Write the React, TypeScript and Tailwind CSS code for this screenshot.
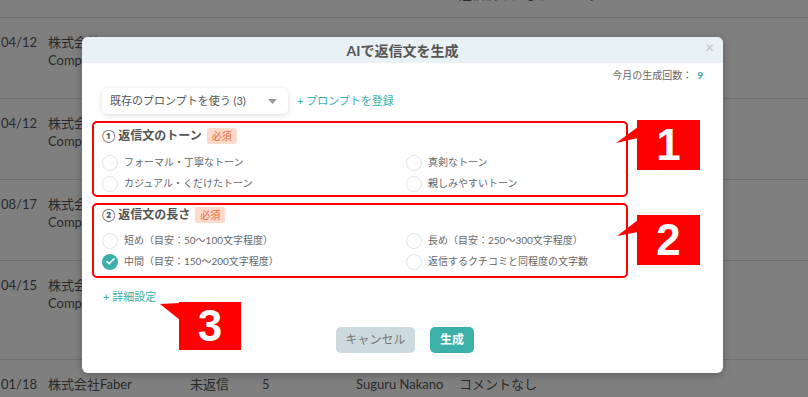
import { Check } from "lucide-react";

const font = "font-['Lato','Noto_Sans_CJK_JP',sans-serif]";

type Row = { date: string; company: string; sub: string; status?: string; count?: string; name?: string; comment?: string; h: string };

const rows: Row[] = [
  { date: "04/12", company: "株式会社Faber", sub: "Company Faber", h: "h-[81px]" },
  { date: "04/12", company: "株式会社Faber", sub: "Company Faber", h: "h-[81px]" },
  { date: "08/17", company: "株式会社Faber", sub: "Company Faber", h: "h-[81px]" },
  { date: "04/15", company: "株式会社Faber", sub: "Company Faber", h: "h-[99px]" },
  {
    date: "01/18",
    company: "株式会社Faber",
    sub: "Company Faber",
    status: "未返信",
    count: "5",
    name: "Suguru Nakano",
    comment: "コメントなし",
    h: "h-[81px]",
  },
];

function Radio({ label, checked }: { label: string; checked?: boolean }) {
  return (
    <div className="flex h-[21px] items-center gap-[6px]">
      {checked ? (
        <span className="flex h-[16px] w-[16px] items-center justify-center rounded-full bg-[#3bb0a9]">
          <Check size={11} strokeWidth={3.5} color="#fff" />
        </span>
      ) : (
        <span className="h-[16px] w-[16px] rounded-full border border-[#dde4e8] bg-white" />
      )}
      <span className="text-[10px] text-[#666]">{label}</span>
    </div>
  );
}

function Required() {
  return (
    <span className="ml-[5px] flex h-[16px] items-center rounded-[2px] bg-[#fddacb] px-[5px] text-[10px] text-[#f0663c]">
      必須
    </span>
  );
}

function Callout({ n, box, tri, points }: { n: string; box: string; tri: string; points: string }) {
  return (
    <>
      <svg className={`absolute ${tri}`} width="24" height="20" viewBox="0 0 24 20">
        <polygon points={points} fill="#ff0000" />
      </svg>
      <div
        className={`absolute flex items-center justify-center bg-[#ff0000] font-['Liberation_Sans',Arial,sans-serif] text-[44px] font-bold leading-none text-white ${box}`}
      >
        {n}
      </div>
    </>
  );
}

export default function App() {
  return (
    <div className={`relative h-[397px] w-[808px] overflow-hidden bg-white ${font}`}>
      {/* page behind the dialog */}
      <div className="flex flex-col">
        <div className="relative h-[18px] border-b border-[#dcdcdc]">
          <span className="absolute left-[459px] top-[-15px] whitespace-nowrap text-[13px] text-[#555]">
            返信済みになりました。
          </span>
        </div>
        {rows.map((r, i) => (
          <div key={i} className={`flex border-b border-[#dcdcdc] pt-[15px] text-[13px] leading-[18px] text-[#555] ${r.h}`}>
            <div className="w-[48px] whitespace-nowrap pl-px">{r.date}</div>
            <div className="flex w-[142px] flex-col whitespace-nowrap">
              <span>{r.company}</span>
              <span>{r.sub}</span>
            </div>
            <div className="w-[72px]">{r.status}</div>
            <div className="w-[94px]">{r.count}</div>
            <div className="w-[103px] whitespace-nowrap">{r.name}</div>
            <div className="whitespace-nowrap">{r.comment}</div>
          </div>
        ))}
      </div>

      <div className="absolute inset-0 bg-black/50" />

      {/* dialog */}
      <div className="absolute left-[82px] top-[37px] flex h-[336px] w-[641px] flex-col rounded-[6px] bg-white shadow-[0_2px_8px_rgba(0,0,0,0.25)]">
        <div className="relative flex h-[26px] items-center justify-center rounded-t-[6px] bg-[#e8f1f3]">
          <span className="text-[14px] font-bold text-[#555]">AIで返信文を生成</span>
          <span className="absolute right-[9px] top-[3px] text-[15px] leading-none text-[#c4c4c4]">×</span>
        </div>

        <div className="flex justify-end pr-[20px] pt-[5px] text-[10px] leading-[14px] text-[#666]">
          今月の生成回数：
          <span className="ml-[5px] font-bold text-[#3bb0a9]">9</span>
        </div>

        <div className="mt-[6px] flex items-center pl-[20px]">
          <div className="flex h-[26px] w-[186px] items-center justify-between rounded-[5px] bg-white pl-[8px] pr-[11px] shadow-[0_1px_5px_rgba(0,0,0,0.15)]">
            <span className="text-[11px] text-[#555]">既存のプロンプトを使う (3)</span>
            <svg width="9" height="5" viewBox="0 0 9 5">
              <polygon points="0,0 9,0 4.5,5" fill="#9a9a9a" />
            </svg>
          </div>
          <span className="ml-[9px] text-[11px] text-[#3bb0a9]">+ プロンプトを登録</span>
        </div>

        {/* tone */}
        <div className="ml-[10px] mt-[7px] w-[536px] rounded-[5px] border-2 border-[#ff0000] px-[8px] pb-[1px] pt-[5px]">
          <div className="flex h-[16px] items-center">
            <span className="text-[12px] font-bold text-[#555]">① 返信文のトーン</span>
            <Required />
          </div>
          <div className="mt-[8px] grid grid-cols-[304px_1fr]">
            <Radio label="フォーマル・丁寧なトーン" />
            <Radio label="真剣なトーン" />
            <Radio label="カジュアル・くだけたトーン" />
            <Radio label="親しみやすいトーン" />
          </div>
        </div>

        {/* length */}
        <div className="ml-[10px] mt-[6px] w-[536px] rounded-[5px] border-2 border-[#ff0000] px-[8px] pb-[4px] pt-[2px]">
          <div className="flex h-[16px] items-center">
            <span className="text-[12px] font-bold text-[#555]">② 返信文の長さ</span>
            <Required />
          </div>
          <div className="mt-[7px] grid grid-cols-[304px_1fr]">
            <Radio label="短め（目安：50〜100文字程度）" />
            <Radio label="長め（目安：250〜300文字程度）" />
            <Radio label="中間（目安：150〜200文字程度）" checked />
            <Radio label="返信するクチコミと同程度の文字数" />
          </div>
        </div>

        <div className="ml-[21px] mt-[12px] text-[11px] leading-[14px] text-[#3bb0a9]">+ 詳細設定</div>

        <div className="ml-[254px] mt-[23px] flex gap-[15px]">
          <span className="flex h-[26px] w-[79px] items-center justify-center rounded-[5px] bg-[#ccd9df] text-[12px] text-[#777]">
            キャンセル
          </span>
          <span className="flex h-[26px] w-[44px] items-center justify-center rounded-[5px] bg-[#3bb0a9] text-[12px] font-bold text-white">
            生成
          </span>
        </div>
      </div>

      <Callout n="1" box="left-[637px] top-[120px] h-[50px] w-[63px]" tri="left-[615px] top-[125px]" points="1,18 23,2 23,13" />
      <Callout n="2" box="left-[637px] top-[215px] h-[50px] w-[63px]" tri="left-[615px] top-[218px]" points="2,18 23,2 23,14" />
      <Callout n="3" box="left-[179px] top-[302px] h-[48px] w-[62px]" tri="left-[158px] top-[302px]" points="2,2 22,1 22,18" />
    </div>
  );
}
